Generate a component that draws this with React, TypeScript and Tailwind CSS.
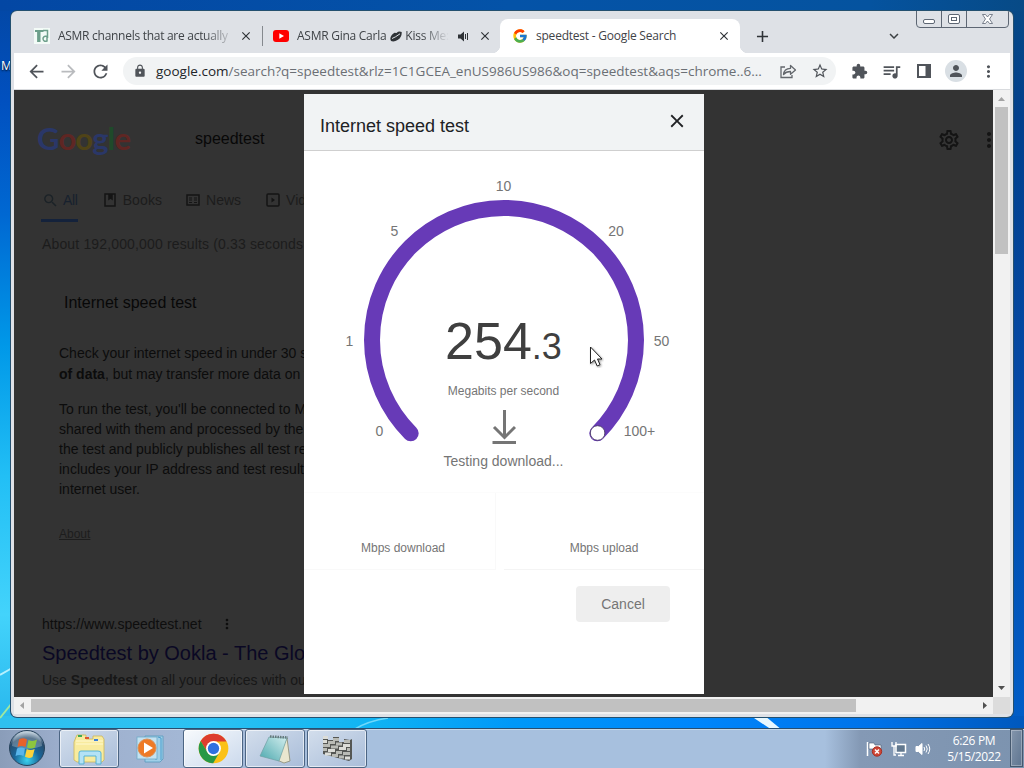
import React from 'react';
import { FcGoogle } from 'react-icons/fc';
import {
  MdAdd,
  MdArrowBack,
  MdArrowForward,
  MdClose,
  MdExpandMore,
  MdExtension,
  MdLock,
  MdMoreVert,
  MdOutlineSettings,
  MdPerson,
  MdQueueMusic,
  MdRefresh,
  MdSearch,
  MdStarBorder,
} from 'react-icons/md';

const ui = "font-['Open_Sans','Noto_Sans',sans-serif]";
const arial = "font-['Liberation_Sans',Arial,sans-serif]";

const scale = [
  { label: '0', x: 75.5, y: 285 },
  { label: '1', x: 45.5, y: 195 },
  { label: '5', x: 90.5, y: 85 },
  { label: '10', x: 199.5, y: 40 },
  { label: '20', x: 312, y: 85 },
  { label: '50', x: 357.5, y: 195 },
  { label: '100+', x: 335.5, y: 285 },
];

function Wallpaper() {
  return (
    <svg className="absolute inset-0" width="1024" height="768" viewBox="0 0 1024 768">
      <defs>
        <linearGradient id="wpLeft" x1="0" y1="0" x2="0" y2="1">
          <stop offset="0" stopColor="#0347a4" />
          <stop offset=".13" stopColor="#0150bf" />
          <stop offset=".28" stopColor="#0068d2" />
          <stop offset=".45" stopColor="#0098e8" />
          <stop offset=".62" stopColor="#22bff5" />
          <stop offset=".8" stopColor="#43d3fb" />
          <stop offset=".95" stopColor="#27b5ec" />
        </linearGradient>
        <linearGradient id="wpTop" x1="0" y1="0" x2="1" y2="0">
          <stop offset="0" stopColor="#0347a4" />
          <stop offset=".5" stopColor="#0453a8" />
          <stop offset=".85" stopColor="#05539f" />
          <stop offset="1" stopColor="#074a86" />
        </linearGradient>
        <linearGradient id="wpRight" x1="0" y1="0" x2="0" y2="1">
          <stop offset="0" stopColor="#074a86" />
          <stop offset=".15" stopColor="#02408c" />
          <stop offset=".5" stopColor="#0349a6" />
          <stop offset="1" stopColor="#0060cc" />
        </linearGradient>
        <linearGradient id="wpBottom" x1="0" y1="0" x2="1" y2="0">
          <stop offset="0" stopColor="#2fc0ef" />
          <stop offset=".2" stopColor="#2cc2f3" />
          <stop offset=".36" stopColor="#10b4f3" />
          <stop offset=".5" stopColor="#0098f8" />
          <stop offset=".68" stopColor="#0086fb" />
          <stop offset=".85" stopColor="#0073ea" />
          <stop offset="1" stopColor="#0058bd" />
        </linearGradient>
      </defs>
      <rect width="512" height="768" fill="url(#wpLeft)" />
      <rect x="512" width="512" height="768" fill="url(#wpRight)" />
      <rect width="1024" height="11" fill="url(#wpTop)" />
      <rect y="716" width="1024" height="14" fill="url(#wpBottom)" />
      <path d="M0 675 Q7 671 12 668" stroke="#b5f0fd" strokeWidth="2" fill="none" />
      <path d="M0 718 L12 703" stroke="#9fe8a0" strokeWidth="2" fill="none" />
      <path d="M751 716 H765 L782 730 H772Z" fill="#e8f8ff" />
      <path d="M355 729 Q368 721 388 718" stroke="#6fd8fb" strokeWidth="1.5" fill="none" />
    </svg>
  );
}

function WindowControls() {
  return (
    <svg width="94" height="18" viewBox="0 0 94 18" fill="none" stroke="#5d6673">
      <path d="M.5 0 V13 Q.5 16.5 4 16.5 H89 Q92.5 16.5 92.5 13 V0" />
      <path d="M25.5 0 V16 M50.5 0 V16" />
      <rect x="7.5" y="8.5" width="11" height="4" rx="1.5" fill="#fff" />
      <rect x="32.5" y="3.5" width="11" height="9" rx="1.5" fill="#fff" />
      <rect x="35.5" y="6.5" width="5" height="3" fill="#fff" />
      <path
        d="M66.5 3.5 H69.5 L71.5 6 L73.5 3.5 H76.5 L73.5 8 L76.5 12.5 H73.5 L71.5 10 L69.5 12.5 H66.5 L69.5 8Z"
        fill="#fff"
        strokeWidth=".8"
      />
    </svg>
  );
}

function TabStrip() {
  return (
    <div className={`flex h-[42px] text-[12px] text-[#3f4347] ${ui}`}>
      <div className="flex items-center mt-2 w-[248px] pl-5 gap-2 shrink-0">
        <svg width="16" height="16" viewBox="0 0 16 16" className="shrink-0">
          <rect width="16" height="16" fill="#f3fbf7" />
          <path d="M1 3 H9.5" stroke="#6d9f8b" strokeWidth="2" />
          <path d="M4.8 3 V14" stroke="#6d9f8b" strokeWidth="3.4" />
          <path d="M9 2.5 H13.5 V10 M13 8 Q9 8 9 11 Q9.5 14 13 13 V9" stroke="#6d9f8b" strokeWidth="1.5" fill="none" />
        </svg>
        <span className="w-[171px] h-[18px] whitespace-nowrap tracking-[-0.28px] [mask-image:linear-gradient(to_right,#000_85%,rgba(0,0,0,0.2))]">
          ASMR channels that are actually
        </span>
        <MdClose size={14} className="ml-[2px] text-[#2f3337] shrink-0" />
      </div>
      <div className="mt-[15px] w-px h-5 bg-[#85898e] shrink-0" />
      <div className="flex items-center mt-2 w-[237px] pl-[10px] shrink-0">
        <svg width="16" height="12" viewBox="0 0 16 12" className="shrink-0">
          <rect width="16" height="12" rx="3" fill="#f00" />
          <path d="M6.3 3.3 L11 6 L6.3 8.7Z" fill="#fff" />
        </svg>
        <span className="flex items-center ml-2 w-[152px] h-[18px] whitespace-nowrap tracking-[-0.26px] [mask-image:linear-gradient(to_right,#000_82%,transparent)]">
          ASMR Gina Carla
          <svg width="12" height="11" viewBox="0 0 12 11" className="ml-[4px] mr-[3px] shrink-0">
            <path d="M.3 8 Q.5 4 4.5 1.8 L6.5 2 L8 .8 Q10 0 11.7 1 Q12 6 8 8.8 Q4 11.3 1 10Z" fill="#2f3337" />
            <path d="M2 7.5 Q5 6.5 10 2.8" stroke="#dee1e6" strokeWidth="1" fill="none" />
          </svg>
          Kiss Me:
        </span>
        <svg width="11" height="11" viewBox="0 0 11 11" className="ml-[9px] shrink-0">
          <path d="M0 3.5 H2.5 L6 .5 V10.5 L2.5 7.5 H0Z" fill="#2f3337" />
          <path d="M7.5 3 V8 M9.5 2 V9" stroke="#2f3337" fill="none" />
        </svg>
        <MdClose size={14} className="ml-[9px] text-[#2f3337] shrink-0" />
      </div>
      <div className="relative flex items-center mt-2 w-[240px] h-[34px] pl-[12px] bg-white rounded-t-lg shrink-0">
        <FcGoogle size={16} />
        <span className="ml-2 w-[171px] whitespace-nowrap tracking-[-0.22px]">speedtest - Google Search</span>
        <MdClose size={14} className="ml-[10px] text-[#2f3337] shrink-0" />
        <span className="absolute -left-2 bottom-0 size-2 bg-[radial-gradient(circle_at_0_0,transparent_8px,#fff_8.5px)]" />
        <span className="absolute -right-2 bottom-0 size-2 bg-[radial-gradient(circle_at_100%_0,transparent_8px,#fff_8.5px)]" />
      </div>
      <MdAdd size={19} className="mt-[16px] ml-[13px] text-[#2f3337]" />
      <MdExpandMore size={18} className="mt-[16px] ml-[113px] text-[#3c4043]" />
      <div className="ml-[13px]">
        <WindowControls />
      </div>
    </div>
  );
}

function Toolbar() {
  return (
    <div className="flex items-center h-[37px] bg-white border-b border-[#d9dbde] text-[#50545a]">
      <MdArrowBack size={21} className="ml-[12px]" />
      <MdArrowForward size={21} className="ml-[11px] text-[#b9bbbe]" />
      <MdRefresh size={21} className="ml-[11px]" />
      <div className="flex items-center ml-[12px] w-[713px] h-7 rounded-full bg-[#f1f3f4] shrink-0">
        <MdLock size={14} className="ml-[10px]" />
        <span className={`ml-[9px] w-[607px] text-[13.5px] whitespace-nowrap text-[#6b6f74] ${ui}`}>
          <span className="text-[#222529]">google.com</span>
          /search?q=speedtest&amp;rlz=1C1GCEA_enUS986US986&amp;oq=speedtest&amp;aqs=chrome..6...
        </span>
        <svg width="17" height="15" viewBox="0 0 17 15" className="ml-[17px]" fill="none" stroke="#63676c" strokeWidth="1.3">
          <path d="M5 3 H1 V13.5 H12 V11" />
          <path d="M3.5 10.5 Q4 4.5 10.5 4.3 V1.5 L15.5 6 L10.5 10.3 V7.5 Q6 7.5 3.5 10.5Z" strokeLinejoin="round" />
        </svg>
        <MdStarBorder size={18} className="ml-[14px]" />
      </div>
      <MdExtension size={17} className="ml-[15px]" />
      <MdQueueMusic size={21} className="ml-[13px]" />
      <svg width="14" height="14" viewBox="0 0 14 14" className="ml-[15px]">
        <rect x="1" y="1" width="12" height="12" fill="none" stroke="#50545a" strokeWidth="2" />
        <rect x="8.5" y="1" width="5" height="12" fill="#50545a" />
      </svg>
      <div className="flex items-center justify-center ml-[14px] size-[22px] rounded-full bg-[#d9dfe4]">
        <MdPerson size={18} />
      </div>
      <MdMoreVert size={19} className="ml-[12px]" />
    </div>
  );
}

function SearchPage() {
  return (
    <div className={`flex justify-between w-[979px] h-[607px] bg-[#333] overflow-hidden ${arial} text-sm text-[#141414] whitespace-nowrap`}>
      <div className="w-[300px] pl-[28px]">
        <div className="flex items-center pt-[27px] h-[70px]">
          <div className="w-[153px] -ml-[5px] -mt-[2px] font-['Lato',sans-serif] font-bold text-[31px] leading-[44px] tracking-[-0.9px]">
            <span className="text-[#2a3768]">G</span>
            <span className="text-[#5f2623]">o</span>
            <span className="text-[#4f4317]">o</span>
            <span className="text-[#2a3768]">g</span>
            <span className="text-[#1f4a2a]">l</span>
            <span className="text-[#5f2623]">e</span>
          </div>
          <span className="ml-[5px] text-base text-[#080808]">speedtest</span>
        </div>
        <div className="flex items-center h-[28px] mt-[26px] text-[#1c1c1c] [&>*]:shrink-0">
          <MdSearch size={17} className="text-[#1b2227]" />
          <span className="ml-[4px] text-[#17212e] tracking-[-0.3px]">All</span>
          <svg width="12" height="14" viewBox="0 0 12 14" className="ml-[26px]" fill="none" stroke="#151515" strokeWidth="1.5">
            <rect x="1" y="1" width="10" height="12" />
            <path d="M5 1 V6 L6.5 5 L8 6 V1" fill="#151515" />
          </svg>
          <span className="ml-[7px] tracking-[.1px]">Books</span>
          <svg width="14" height="12" viewBox="0 0 14 12" className="ml-[24px]" fill="none" stroke="#151515" strokeWidth="1.5">
            <rect x="1" y="1" width="12" height="10" />
            <path d="M3 4 H6 M8 4 H11 M3 6 H6 M8 6 H11 M3 8.5 H6 M8 8.5 H11" strokeWidth="1" />
          </svg>
          <span className="ml-[6px]">News</span>
          <svg width="14" height="14" viewBox="0 0 14 14" className="ml-[25px]" fill="none" stroke="#151515" strokeWidth="1.5">
            <rect x="1" y="1" width="12" height="12" rx="1" />
            <path d="M5.5 4.5 V9.5 L9 7Z" fill="#151515" stroke="none" />
          </svg>
          <span className="ml-[6px]">Vid</span>
        </div>
        <div className="mt-[5px] -ml-px w-[37px] h-[3px] bg-[#14223b]" />
        <p className="mt-[12px] leading-5 tracking-[.15px] text-[#1c1c1c]">About 192,000,000 results (0.33 seconds</p>
        <h2 className="mt-[37px] ml-[22px] text-base leading-6 text-[#080808]">Internet speed test</h2>
        <div className="ml-[17px] text-[#0c0c0c]">
          <p className="mt-[28px] leading-[21px]">
            Check your internet speed in under 30 s
            <br />
            <b>of data</b>, but may transfer more data on f
          </p>
          <p className="mt-[14px] leading-5">
            To run the test, you&apos;ll be connected to M
            <br />
            shared with them and processed by the
            <br />
            the test and publicly publishes all test re
            <br />
            includes your IP address and test result
            <br />
            internet user.
          </p>
          <p className="mt-[25px] text-xs leading-5 text-[#1d1d1d] underline">About</p>
        </div>
        <div className="flex items-center mt-[70px] h-5 text-[#0e0e0e]">
          https://www.speedtest.net
          <MdMoreVert size={16} className="ml-[17px]" />
        </div>
        <h3 className="mt-[6px] text-xl leading-[26px] text-[#0a0824]">Speedtest by Ookla - The Glo</h3>
        <p className="mt-[4px] leading-5 text-[#171717]">
          Use <b>Speedtest</b> on all your devices with ou
        </p>
      </div>
      <div className="flex items-center h-[100px] text-[#141414]">
        <MdOutlineSettings size={24} />
        <MdMoreVert size={24} className="ml-[16px] -mr-[8px]" />
      </div>
    </div>
  );
}

function SpeedDialog() {
  return (
    <div className={`absolute left-[290px] top-[4px] w-[400px] h-[600px] bg-white text-[#757575] ${arial}`}>
      <div className="flex justify-between h-[57px] pl-4 pr-[16px] bg-[#f1f3f4] border-b border-[#cfcfcf]">
        <h1 className="mt-[18px] text-lg leading-7 text-[#202124]">Internet speed test</h1>
        <MdClose size={22} className="mt-[16px] text-[#202124]" />
      </div>
      <div className="grid h-[341px]">
        <svg className="col-start-1 row-start-1" width="400" height="341" viewBox="0 0 400 341">
          <path d="M106.7 282.3 A132 132 0 1 1 293.3 282.3" fill="none" stroke="#673ab7" strokeWidth="16" strokeLinecap="round" />
          <circle cx="293.6" cy="282" r="7.3" fill="#fff" stroke="#4b3a66" strokeWidth=".9" />
          {scale.map((tick) => (
            <text key={tick.label} x={tick.x} y={tick.y} fontSize="14" textAnchor="middle" fill="#757575">
              {tick.label}
            </text>
          ))}
        </svg>
        <div className="col-start-1 row-start-1 flex flex-col items-center pt-[160px]">
          <div className="-ml-px text-[52px] leading-[60px] text-[#3f3f3f]">
            254<span className="text-[36px]">.3</span>
          </div>
          <div className="mt-[6px] -ml-px text-xs">Megabits per second</div>
          <svg width="24" height="35" viewBox="0 0 24 35" className="mt-[11px]" fill="none" stroke="#757575" strokeWidth="3">
            <path d="M12.5 0 V27 M2 17 L12.5 27.5 L23 17 M.5 32.5 H24" />
          </svg>
          <div className="mt-[6px] -ml-px text-sm">Testing download...</div>
        </div>
      </div>
      <div className="flex h-[78px] gap-[8px] text-xs border-t border-[#fcfcfc]">
        <div className="w-[192px] pt-[47px] pl-[7px] text-center border-b border-r border-[#f9f9f9]">Mbps download</div>
        <div className="flex-1 pt-[47px] text-center border-b border-[#f4f4f4]">Mbps upload</div>
      </div>
      <div className="flex justify-end pt-4 pr-[34px]">
        <button className="w-[94px] h-9 rounded bg-[#eee] text-sm">Cancel</button>
      </div>
    </div>
  );
}

function BrowserWindow() {
  return (
    <div className="absolute left-[11px] top-[11px] w-[1002px] h-[706px] pl-[3px] pr-[3px] rounded-[6px] bg-[#dee1e6] shadow-[0_0_0_1px_#24506f] overflow-hidden">
      <TabStrip />
      <Toolbar />
      <div className="relative flex -mt-px border-t border-[#d9dbde]">
        <SearchPage />
        <div className="flex flex-col items-center w-[17px] h-[607px] bg-[#f1f1f1]">
          <svg width="17" height="17" viewBox="0 0 17 17">
            <path d="M5 11 L8.5 7 L12 11Z" fill="#a3a3a3" />
          </svg>
          <div className="w-[13px] h-[147px] bg-[#c1c1c1]" />
          <svg width="17" height="17" viewBox="0 0 17 17" className="mt-auto">
            <path d="M5 6 L8.5 10 L12 6Z" fill="#505050" />
          </svg>
        </div>
        <SpeedDialog />
      </div>
      <div className="flex">
        <div className="flex items-center w-[979px] h-[17px] bg-[#f1f1f1]">
          <svg width="17" height="17" viewBox="0 0 17 17">
            <path d="M10 5 L6 8.5 L10 12Z" fill="#a3a3a3" />
          </svg>
          <div className="w-[825px] h-[13px] bg-[#c1c1c1]" />
          <svg width="17" height="17" viewBox="0 0 17 17" className="ml-auto">
            <path d="M7 5 L11 8.5 L7 12Z" fill="#505050" />
          </svg>
        </div>
        <div className="flex-1 h-[17px] bg-[#dcdcdc]" />
      </div>
    </div>
  );
}

function StartOrb() {
  return (
    <svg width="38" height="38" viewBox="0 0 38 38">
      <defs>
        <radialGradient id="orb" cx=".5" cy=".85" r=".8">
          <stop offset="0" stopColor="#3ad2ee" />
          <stop offset=".45" stopColor="#19679b" />
          <stop offset=".8" stopColor="#284c6c" />
          <stop offset="1" stopColor="#a7bccd" />
        </radialGradient>
      </defs>
      <circle cx="19" cy="19" r="17.5" fill="url(#orb)" stroke="#27435c" />
      <path d="M4 17 A15 15 0 0 1 34 17 Q19 23 4 17Z" fill="#fff" opacity=".25" />
      <path d="M11 10.5 Q15 8 19 10.5 L17.5 18 Q13.5 16 9.5 18Z" fill="#e8622a" />
      <path d="M20.5 11 Q25 13 29 10.5 L27 18.5 Q23 20.5 19 18.5Z" fill="#8cc63f" />
      <path d="M9 19.5 Q13 17.5 17 19.5 L15.5 27 Q11.5 25 7.5 27Z" fill="#59b5ea" />
      <path d="M18.7 20 Q22.5 22 26.7 20 L24.5 28 Q21 30 17 27.8Z" fill="#fbd23c" />
    </svg>
  );
}

function ExplorerIcon() {
  return (
    <svg width="34" height="32" viewBox="0 0 34 32">
      <path d="M4 4 L12 2 L13 26 L4 28Z" fill="#e9d87a" stroke="#cdb74e" strokeWidth=".6" />
      <path d="M5 2 H14 V6 H21 V3 H30 L32 6 V27 L30 29 H5 L2 27 V9Z" fill="#f8eb9e" stroke="#cbb65b" strokeWidth=".8" />
      <path d="M4 8 H31 M4 11 H31" stroke="#fff9d0" />
      <rect x="6" y="2" width="4" height="2" fill="#3eaa55" />
      <rect x="13" y="4" width="4" height="2" fill="#e0552d" />
      <rect x="22" y="6" width="4" height="2" fill="#3b7fd9" />
      <path d="M7 31 V20 Q7 18 9 18 H26 Q29 18 29 20 V31 H24 V23 H12 V31Z" fill="#b4e2f5" stroke="#4caed3" strokeWidth=".9" />
    </svg>
  );
}

function MediaIcon() {
  return (
    <svg width="30" height="28" viewBox="0 0 30 28">
      <path d="M9 1 H27 V24 L24 27 H9Z" fill="#9fcfe8" stroke="#5799bd" strokeWidth=".8" />
      <path d="M22 2 L25 3 V25 M20 2 V25" stroke="#4b9dcc" fill="none" />
      <rect x="1" y="2" width="20" height="22" fill="#c4e2f1" stroke="#6eabc8" strokeWidth=".8" />
      <circle cx="11" cy="13" r="9" fill="#ee7a26" stroke="#d9915a" />
      <path d="M8 7.5 L17 13 L8 18.5Z" fill="#fff" />
    </svg>
  );
}

function ChromeIcon() {
  return (
    <svg width="31" height="31" viewBox="0 0 48 48">
      <circle cx="24" cy="24" r="23" fill="#fbc116" />
      <path d="M24 13 H44.2 A23 23 0 0 0 4.08 12.5 L14.5 29.5Z" fill="#dd3c2e" />
      <path d="M4.08 12.5 L14.5 29.5 Q18 35 24 35 L33.5 29.5 L23.5 47 A23 23 0 0 1 4.08 12.5Z" fill="#279847" />
      <circle cx="24" cy="24" r="11.5" fill="#fff" />
      <circle cx="24" cy="24" r="8.8" fill="#2f71df" />
    </svg>
  );
}

function NotepadIcon() {
  return (
    <svg width="32" height="30" viewBox="0 0 32 30">
      <defs>
        <linearGradient id="note" x1="0" y1="1" x2="1" y2="0">
          <stop offset="0" stopColor="#4ba8ae" />
          <stop offset="1" stopColor="#d3eeee" />
        </linearGradient>
      </defs>
      <path d="M28 4 L31 27 L25 29 L18 26Z" fill="#e9e6cf" stroke="#8b8b72" strokeWidth=".8" />
      <path d="M10 3 L28 4 L20 27 L1 22Z" fill="url(#note)" stroke="#6f9fa2" strokeWidth=".7" />
      <path d="M11 2.5 L29 3.5" stroke="#657a7c" strokeWidth="2.5" strokeDasharray="1.5 1" />
    </svg>
  );
}

const bricks = [
  { x: 1, y: 1, w: 5 },
  { x: 11, y: 3, w: 6 },
  { x: 22, y: 5, w: 6 },
  { x: 1, y: 5, w: 4 },
  { x: 6, y: 6, w: 7 },
  { x: 14, y: 7.5, w: 6 },
  { x: 21, y: 9, w: 7 },
  { x: 1, y: 9, w: 7 },
  { x: 9, y: 10.5, w: 7 },
  { x: 17, y: 12, w: 7 },
  { x: 25, y: 13, w: 3 },
  { x: 1, y: 13, w: 4 },
  { x: 6, y: 14, w: 7 },
  { x: 14, y: 16, w: 6 },
  { x: 21, y: 17, w: 7 },
  { x: 3, y: 17.5, w: 6 },
  { x: 10, y: 19, w: 6 },
  { x: 17, y: 20.5, w: 5 },
  { x: 23, y: 21.5, w: 5 },
];

function FirewallIcon() {
  return (
    <svg width="31" height="27" viewBox="0 0 31 27">
      <path d="M1 1 H6 V5 H11 V2 H17 V7 H22 V4 L28 5 L30 4 V24 L27 26 L1 19Z" fill="#555754" />
      {bricks.map((brick, i) => (
        <rect key={i} x={brick.x} y={brick.y} width={brick.w} height="3" fill={i % 3 ? '#b9bbb5' : '#dcddd8'} />
      ))}
    </svg>
  );
}

function TaskButton({ active = false, children }: { active?: boolean; children: React.ReactNode }) {
  return (
    <div
      className={`flex items-center justify-center w-[60px] h-[39px] rounded-[3px] border border-[#4c6583] ring-1 ring-inset ring-white/60 shrink-0 ${
        active ? 'bg-linear-to-br from-[#f7fafd] to-[#cbd9ec]' : 'bg-linear-to-br from-[#d3deec] to-[#a9bdd9]'
      }`}
    >
      {children}
    </div>
  );
}

function Taskbar() {
  return (
    <div
      className={`absolute left-0 top-[728px] flex w-[1024px] h-[40px] border-t border-[#294e70] bg-[linear-gradient(to_right,#8a9db9_0px,#9caecc_60px,#a3b7d5_180px,#a7c0de_370px,#a7c0de_825px,#8499b5_860px,#7c93af_1024px)] shadow-[inset_0_1px_0_#c5d9eb] ${ui}`}
    >
      <div className="ml-[8px] w-[51px] shrink-0">
        <StartOrb />
      </div>
      <TaskButton>
        <ExplorerIcon />
      </TaskButton>
      <div className="flex items-center justify-center w-[64px] shrink-0">
        <MediaIcon />
      </div>
      <div className="flex gap-[2px]">
        <TaskButton active>
          <ChromeIcon />
        </TaskButton>
        <TaskButton>
          <NotepadIcon />
        </TaskButton>
        <TaskButton>
          <FirewallIcon />
        </TaskButton>
      </div>
      <div className="flex items-center gap-[8px] ml-auto">
        <svg width="17" height="16" viewBox="0 0 17 16">
          <path d="M1.5 1 V15" stroke="#fff" strokeWidth="1.5" />
          <path d="M3 2 H8 L9 4 H15 V10 H8 L7 8 H3Z" fill="#fff" stroke="#4a5c72" strokeWidth=".6" />
          <circle cx="11" cy="10.5" r="4.7" fill="#cf4636" stroke="#a52f24" />
          <path d="M9 8.5 L13 12.5 M13 8.5 L9 12.5" stroke="#fff" strokeWidth="1.5" />
        </svg>
        <svg width="16" height="16" viewBox="0 0 16 16" fill="none">
          <path d="M5 3.5 H14.5 V11.5 H5Z" fill="#62788f" stroke="#fff" strokeWidth="1.5" />
          <path d="M1 1 V5 H5 V1 M3 5 V14 H5 M7 14.5 H13 M10 12 V14" stroke="#fff" strokeWidth="1.3" />
        </svg>
        <svg width="16" height="14" viewBox="0 0 16 14" fill="none" stroke="#fff">
          <path d="M1 4.5 H3.5 L7 1.5 V12.5 L3.5 9.5 H1Z" fill="#fff" />
          <path d="M9 5 Q10.5 7 9 9 M11 3.5 Q13.5 7 11 10.5 M13 2 Q16.5 7 13 12" />
        </svg>
      </div>
      <div className="ml-[8px] w-[70px] pt-[4px] text-center text-[12px] leading-[16px] tracking-[-0.35px] text-white whitespace-nowrap">
        6:26 PM
        <br />
        5/15/2022
      </div>
      <div className="w-[13px] h-[38px] ml-px mr-px border border-[#45586e] bg-linear-to-br from-[#8496ac] to-[#5f7590] ring-1 ring-inset ring-white/30" />
    </div>
  );
}

export default function App() {
  return (
    <div className="relative w-[1024px] h-[768px] overflow-hidden bg-[#0453a8]">
      <Wallpaper />
      <span className={`absolute left-px top-[58px] text-[12px] leading-4 text-white [text-shadow:0_1px_2px_#000] ${ui}`}>M</span>
      <BrowserWindow />
      <Taskbar />
      <svg className="absolute left-[589px] top-[346px]" width="15" height="22" viewBox="0 0 15 22">
        <path
          d="M1.5 1 V17.5 L5.5 14 L8.2 20 L11 18.7 L8.5 13 H13Z"
          fill="#fff"
          stroke="#222"
          className="drop-shadow-[1px_1px_1px_rgba(0,0,0,0.4)]"
        />
      </svg>
    </div>
  );
}
